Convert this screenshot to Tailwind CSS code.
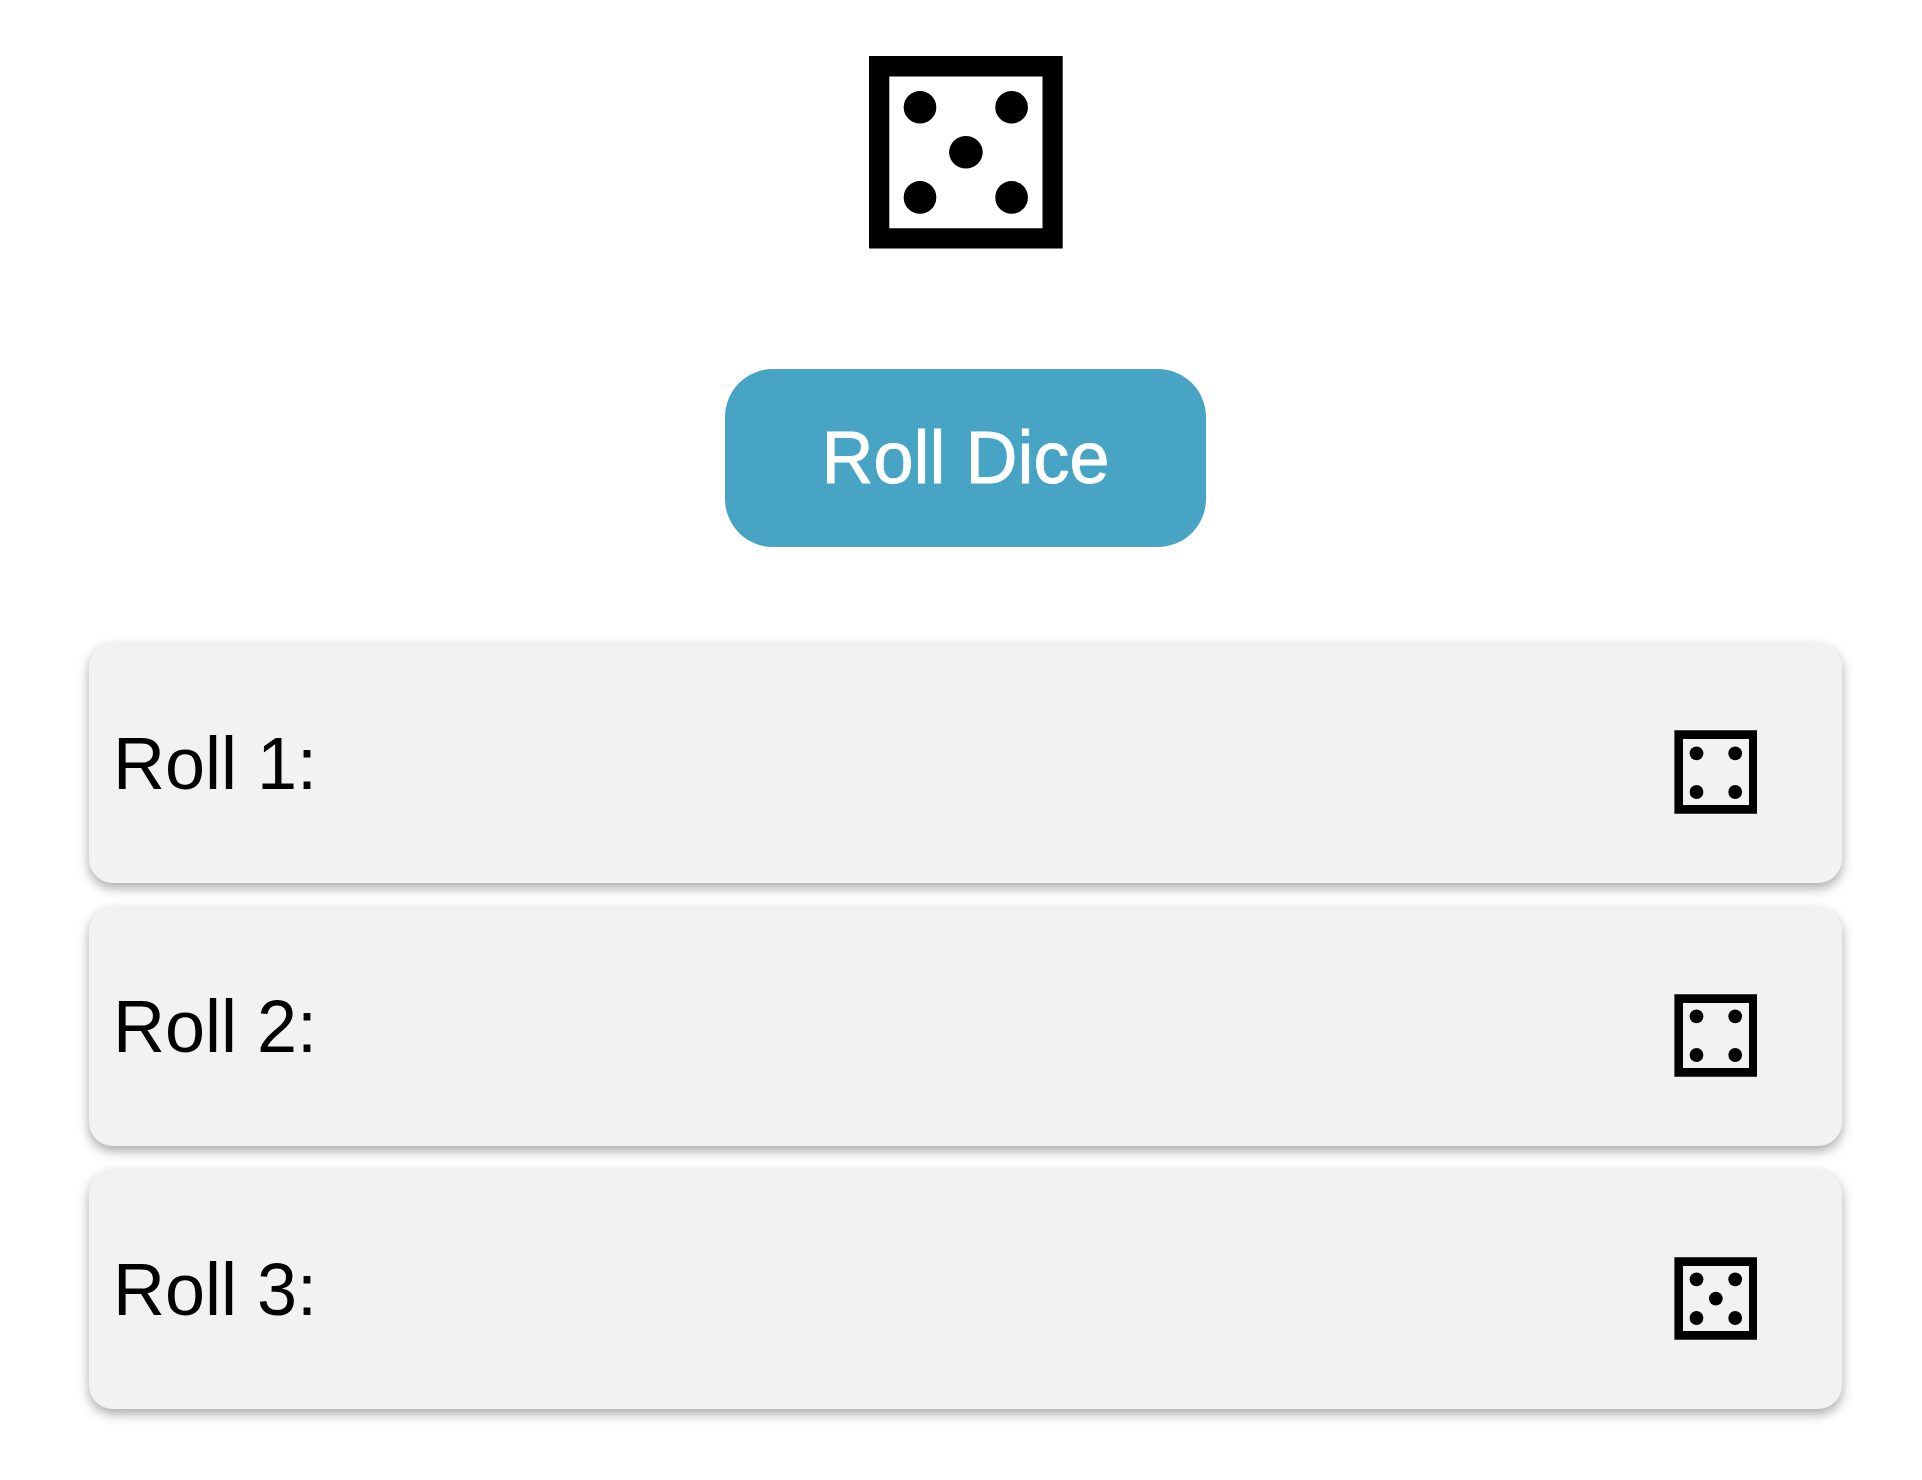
<!DOCTYPE html>
<html lang="en">
<head>
<meta charset="utf-8">
<title>Roll Dice</title>
<script src="https://cdn.jsdelivr.net/npm/@tailwindcss/browser@4"></script>
</head>
<body class="h-[1480px] overflow-hidden bg-white font-['Liberation_Sans',Arial,sans-serif] text-[72px] text-black">
<main class="flex flex-col pt-14 pr-20 pl-[89px]">
  <svg class="ml-[780px] h-[193px] w-[194px]" viewBox="0 0 194 193">
    <path fill-rule="evenodd" d="M0 0H193.7V192.6H0ZM20.3 20.5V172.3H173.5V20.5Z"/>
    <circle cx="51" cy="51.2" r="16.3"/><circle cx="142.6" cy="51.2" r="16.3"/>
    <ellipse cx="96.9" cy="96.3" rx="16.8" ry="16.3"/>
    <circle cx="51" cy="141.4" r="16.3"/><circle cx="142.6" cy="141.4" r="16.3"/>
  </svg>
  <button class="mt-30 ml-[636px] flex h-[178px] w-[481px] items-center justify-center rounded-[48px] bg-[#47a4c4] leading-[82px] text-white"><span class="origin-[50%_80%] scale-y-[1.03] [-webkit-text-stroke:0.8px_white]">Roll Dice</span></button>
  <ul class="mt-24 flex flex-col gap-6">
    <li class="flex h-60 justify-between rounded-3xl bg-[#f2f2f2] pr-[85px] pl-6 shadow-[0_5px_12px_rgba(0,0,0,0.34)]">
      <span class="mt-20 h-[82px] origin-[50%_80%] scale-y-[1.03] leading-[82px]">Roll 1:</span>
      <svg class="mt-[87px] h-[84px] w-[83px]" viewBox="0 0 83 84">
        <path fill-rule="evenodd" d="M.4 .2H83V83.8H.4ZM9 9V74.9H75V9Z"/>
        <circle cx="22.5" cy="23.3" r="6.9"/><circle cx="61.2" cy="23.3" r="6.9"/>
        <circle cx="22.5" cy="62" r="6.9"/><circle cx="61.2" cy="62" r="6.9"/>
      </svg>
    </li>
    <li class="flex h-[239px] justify-between rounded-3xl bg-[#f2f2f2] pr-[85px] pl-6 shadow-[0_5px_12px_rgba(0,0,0,0.34)]">
      <span class="mt-[79px] h-[82px] origin-[50%_80%] scale-y-[1.03] leading-[82px]">Roll 2:</span>
      <svg class="mt-[87px] h-[83px] w-[83px]" viewBox="0 0 83 83">
        <path fill-rule="evenodd" d="M.4 .2H83V82.8H.4ZM9 9V74H75V9Z"/>
        <circle cx="22.5" cy="22.3" r="6.9"/><circle cx="61.2" cy="22.3" r="6.9"/>
        <circle cx="22.5" cy="61" r="6.9"/><circle cx="61.2" cy="61" r="6.9"/>
      </svg>
    </li>
    <li class="flex h-[239px] justify-between rounded-3xl bg-[#f2f2f2] pr-[85px] pl-6 shadow-[0_5px_12px_rgba(0,0,0,0.34)]">
      <span class="mt-[79px] h-[82px] origin-[50%_80%] scale-y-[1.03] leading-[82px]">Roll 3:</span>
      <svg class="mt-[87px] h-[83px] w-[83px]" viewBox="0 0 83 83">
        <path fill-rule="evenodd" d="M.4 .2H83V82.8H.4ZM9 9V74H75V9Z"/>
        <circle cx="22.5" cy="22.3" r="6.9"/><circle cx="61.2" cy="22.3" r="6.9"/>
        <circle cx="41.8" cy="41.6" r="6.9"/>
        <circle cx="22.5" cy="61" r="6.9"/><circle cx="61.2" cy="61" r="6.9"/>
      </svg>
    </li>
  </ul>
</main>
</body>
</html>
